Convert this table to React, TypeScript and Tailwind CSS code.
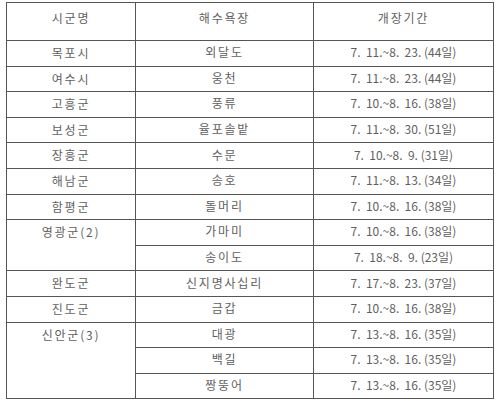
import React from 'react';

type Row = {
  county?: string;
  span?: number;
  beach: string;
  period: string;
};

const rows: Row[] = [
  { county: '목포시', beach: '외달도', period: '7.  11.~8.  23. (44일)' },
  { county: '여수시', beach: '웅천', period: '7.  11.~8.  23. (44일)' },
  { county: '고흥군', beach: '풍류', period: '7.  10.~8.  16. (38일)' },
  { county: '보성군', beach: '율포솔밭', period: '7.  11.~8.  30. (51일)' },
  { county: '장흥군', beach: '수문', period: '7.  10.~8.  9. (31일)' },
  { county: '해남군', beach: '송호', period: '7.  11.~8.  13. (34일)' },
  { county: '함평군', beach: '돌머리', period: '7.  10.~8.  16. (38일)' },
  { county: '영광군(2)', span: 2, beach: '가마미', period: '7.  10.~8.  16. (38일)' },
  { beach: '송이도', period: '7.  18.~8.  9. (23일)' },
  { county: '완도군', beach: '신지명사십리', period: '7.  17.~8.  23. (37일)' },
  { county: '진도군', beach: '금갑', period: '7.  10.~8.  16. (38일)' },
  { county: '신안군(3)', span: 3, beach: '대광', period: '7.  13.~8.  16. (35일)' },
  { beach: '백길', period: '7.  13.~8.  16. (35일)' },
  { beach: '짱뚱어', period: '7.  13.~8.  16. (35일)' },
];

const cell = 'border border-[#555] text-center p-0';

export default function App() {
  return (
    <div className="w-[500px] h-[410px] bg-white pl-[6px] pt-[2px] font-['Noto_Sans_CJK_KR','Noto_Sans',sans-serif] text-[12px] tracking-[1.8px] text-[#5f5f5f]">
      <table className="border-collapse table-fixed w-[487px]">
        <colgroup>
          <col className="w-[129px]" />
          <col className="w-[178px]" />
          <col className="w-[180px]" />
        </colgroup>
        <thead>
          <tr className="h-[38px]">
            <th className={`${cell} align-top pt-[6px] font-normal`}>시군명</th>
            <th className={`${cell} align-top pt-[6px] font-normal`}>해수욕장</th>
            <th className={`${cell} align-top pt-[6px] font-normal`}>개장기간</th>
          </tr>
        </thead>
        <tbody>
          {rows.map((r, i) => (
            <tr key={i} className="h-[25.6px]">
              {r.county && (
                <td rowSpan={r.span ?? 1} className={`${cell} align-top pt-[2px] leading-[20px]`}>
                  {r.county}
                </td>
              )}
              <td className={`${cell} align-middle leading-[20px] pb-[2px]`}>{r.beach}</td>
              <td className={`${cell} align-middle leading-[20px] pb-[2px] whitespace-pre tracking-[0px]`}>
                {r.period}
              </td>
            </tr>
          ))}
        </tbody>
      </table>
    </div>
  );
}
